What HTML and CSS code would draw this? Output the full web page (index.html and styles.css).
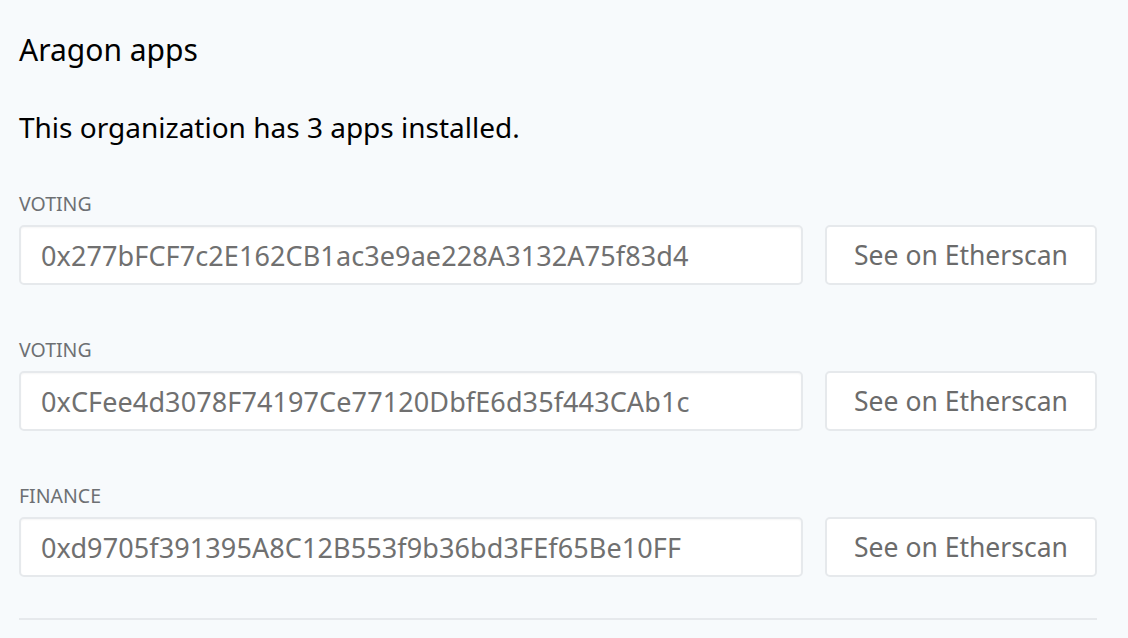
FILE: index.html
```html
<!DOCTYPE html>
<html>
<head>
<meta charset="utf-8">
<link rel="stylesheet" href="styles.css">
</head>
<body>
<main class="panel">
  <h1 class="title">Aragon apps</h1>
  <p class="intro">This organization has 3 apps installed.</p>
  <section class="app">
    <div class="label">VOTING</div>
    <div class="row">
      <div class="field">0x277bFCF7c2E162CB1ac3e9ae228A3132A75f83d4</div>
      <button class="btn">See on Etherscan</button>
    </div>
  </section>
  <section class="app">
    <div class="label">VOTING</div>
    <div class="row">
      <div class="field">0xCFee4d3078F74197Ce77120DbfE6d35f443CAb1c</div>
      <button class="btn">See on Etherscan</button>
    </div>
  </section>
  <section class="app">
    <div class="label">FINANCE</div>
    <div class="row">
      <div class="field">0xd9705f391395A8C12B553f9b36bd3FEf65Be10FF</div>
      <button class="btn">See on Etherscan</button>
    </div>
  </section>
  <hr class="divider">
</main>
</body>
</html>
```
FILE: styles.css
```css
html, body {
  margin: 0;
  padding: 0;
  background: #f7fafc;
}
body {
  font-family: "Noto Sans", "Open Sans", sans-serif;
  color: #000;
}
.panel {
  padding: 30px 31px 0 19px;
}
.title {
  margin: 0;
  font-size: 30px;
  font-weight: 400;
  line-height: 40px;
}
.intro {
  margin: 37px 0 0;
  font-size: 28px;
  line-height: 40px;
}
.app {
  margin-top: 45px;
}
.app + .app {
  margin-top: 53px;
}
.label {
  font-size: 19.5px;
  line-height: 24px;
  color: #6d7073;
  margin-bottom: 9px;
}
.row {
  display: flex;
  gap: 22px;
}
.field {
  flex: 1;
  height: 60px;
  box-sizing: border-box;
  background: #fff;
  border: 2px solid #e6e9ec;
  border-radius: 5px;
  box-shadow: inset 0 1px 2px rgba(0,0,0,0.04);
  padding: 0 20px;
  display: flex;
  align-items: center;
  font-size: 27px;
  letter-spacing: 0.1px;
  color: #707070;
  white-space: nowrap;
}
.btn {
  width: 272px;
  height: 60px;
  box-sizing: border-box;
  background: #fff;
  border: 2px solid #e6e9ec;
  border-radius: 5px;
  font-family: inherit;
  font-size: 26.5px;
  color: #6b6b6b;
  padding: 0;
}
.divider {
  margin: 41px 0 0;
  border: 0;
  border-top: 2px solid #e6e9ec;
}
```
